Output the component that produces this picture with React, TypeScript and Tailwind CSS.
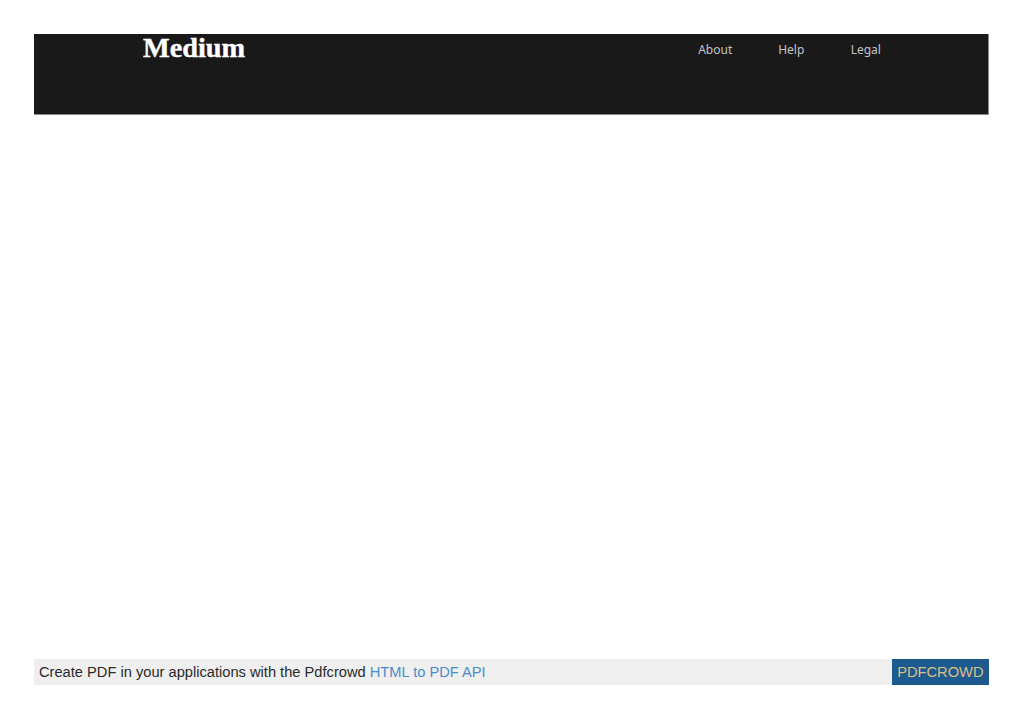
export default function App() {
  return (
    <div className="flex h-[724px] flex-col bg-white px-[34px] pt-[34px] font-['Liberation_Sans',sans-serif]">
      <header className="flex h-[81px] items-start border-r border-b border-[#8a8a8a] bg-[#191919] pl-[109px]">
        <span className="text-[28.3px] leading-[27px] font-bold text-white [-webkit-text-stroke:0.4px_white] font-['Liberation_Serif',serif]">
          Medium
        </span>
        <nav className="ml-[453px] flex pt-[7px] text-[12px] leading-[18px] text-[#c4c4c4] font-['Noto_Sans',sans-serif]">
          <a className="w-[80px]">About</a>
          <a className="w-[72.5px]">Help</a>
          <a>Legal</a>
        </nav>
      </header>

      <footer className="mt-[544px] flex h-[26px] items-center justify-between bg-[#efefef] text-[14.667px] text-[#2a2a2a]">
        <p className="pl-[5px]">
          Create PDF in your applications with the Pdfcrowd{" "}
          <a className="text-[#4a8cc9]">HTML to PDF API</a>
        </p>
        <a className="flex h-full items-center bg-[#1d5a8e] px-[5.5px] text-[#d9bf87]">PDFCROWD</a>
      </footer>
    </div>
  );
}
